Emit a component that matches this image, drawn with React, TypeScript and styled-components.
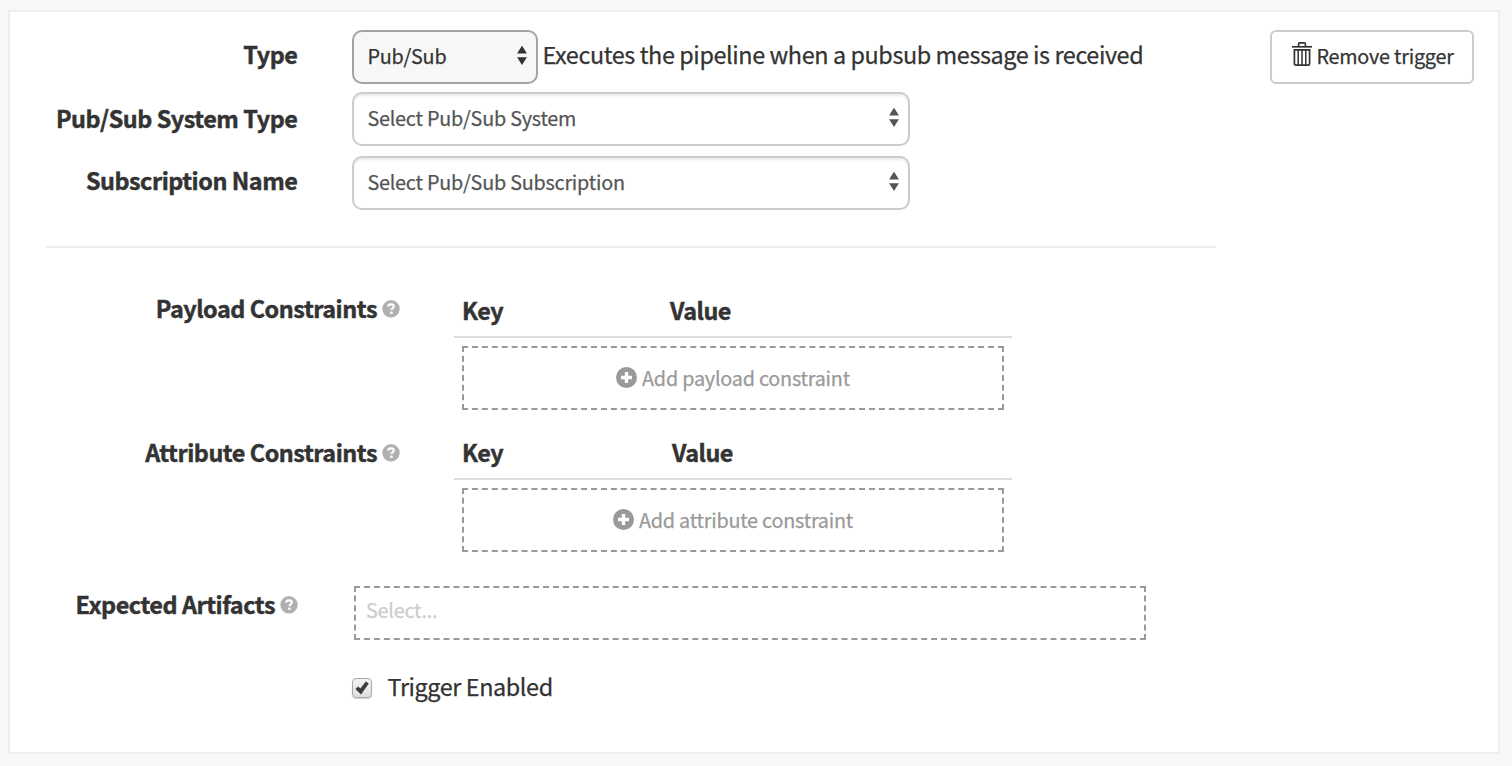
import React from "react";
import styled, { createGlobalStyle, css } from "styled-components";

const GlobalStyle = createGlobalStyle`
  *, *::before, *::after { box-sizing: border-box; }
  body {
    margin: 0;
    background: #f8f8f8;
    color: #333;
    font-family: "Noto Sans CJK SC", "Noto Sans", sans-serif;
    font-size: 23.4px;
    letter-spacing: -0.41px;
    line-height: 36px;
    white-space: nowrap;
    -webkit-text-stroke: 0.25px currentColor;
  }
`;

const boldText = css`
  font-weight: 700;
  letter-spacing: -0.47px;
  -webkit-text-stroke-width: 0.45px;
`;

const controlText = css`
  font-size: 19.8px;
  letter-spacing: -0.22px;
`;

const Page = styled.main`
  min-height: 766px;
  padding: 10px 12px 12px 8px;
`;

const Panel = styled.section`
  display: flex;
  justify-content: space-between;
  align-items: flex-start;
  height: 744px;
  padding: 18px 24px 0 36px;
  border: 2px solid #eee;
  background: #fff;
`;

const Form = styled.form`
  display: flex;
  flex-direction: column;
  width: 1170px;
`;

const Row = styled.div<{ $gap?: number; $label?: number }>`
  display: grid;
  grid-template-columns: ${(p) => p.$label ?? 252}px 1fr;
  column-gap: 54px;
  align-items: start;
  margin-top: ${(p) => p.$gap ?? 0}px;
`;

const Label = styled.label<{ $top?: number; $right?: number }>`
  display: flex;
  justify-content: flex-end;
  align-items: center;
  gap: 5px;
  margin-top: ${(p) => p.$top ?? 0}px;
  padding-right: ${(p) => p.$right ?? 0}px;
  ${boldText}
`;

const Inline = styled.div`
  display: flex;
  align-items: flex-start;
  gap: 4.5px;
`;

const SelectBox = styled.div<{ $width: number; $active?: boolean }>`
  display: flex;
  justify-content: space-between;
  align-items: center;
  width: ${(p) => p.$width}px;
  height: 54px;
  padding: 0 8px 3px 13.4px;
  border: 2px solid ${(p) => (p.$active ? "#a3a3a3" : "#ccc")};
  border-radius: 10px;
  background: ${(p) => (p.$active ? "#f7f7f7" : "#fff")};
  box-shadow: ${(p) => (p.$active ? "none" : "inset 0 2px 2px rgba(0, 0, 0, 0.075)")};
  color: ${(p) => (p.$active ? "#333" : "#555")};
  ${controlText}
`;

const Description = styled.span`
  margin-top: 6px;
`;

const Divider = styled.hr`
  width: 100%;
  height: 2px;
  margin: 36px 0 0;
  border: 0;
  background: #eee;
`;

const Table = styled.div`
  width: 558px;
`;

const TableHead = styled.div<{ $key: number }>`
  display: grid;
  grid-template-columns: ${(p) => p.$key}px 1fr;
  height: 46px;
  padding-left: 8px;
  border-bottom: 2px solid #ddd;
  ${boldText}
`;

const AddButton = styled.button`
  display: flex;
  justify-content: center;
  align-items: center;
  gap: 5px;
  width: 542px;
  height: 64px;
  margin: 8px 8px 0;
  padding: 0 0 1px;
  border: 2px dashed #999;
  background: transparent;
  color: #999;
  font: inherit;
  ${controlText}
`;

const ArtifactSelect = styled.div`
  display: flex;
  align-items: center;
  width: 792px;
  height: 54px;
  margin-left: 2px;
  padding: 0 10px 7px;
  border: 2px dashed #999;
  color: #ccc;
  ${controlText}
`;

const CheckLabel = styled.label`
  display: flex;
  align-items: center;
  gap: 15.5px;
`;

const CheckMark = styled.span`
  display: flex;
  align-items: center;
  justify-content: center;
  width: 20px;
  height: 20px;
  margin-top: 4px;
  border: 1.5px solid #aaa;
  border-radius: 4px;
  background: linear-gradient(#f4f4f4, #dedede);
  box-shadow: 0 1px 1px rgba(0, 0, 0, 0.18);
`;

const RemoveButton = styled.button`
  display: flex;
  align-items: center;
  gap: 4.4px;
  width: 204px;
  height: 54px;
  padding: 0 0 3px 20px;
  border: 2px solid #ccc;
  border-radius: 6px;
  background: #fff;
  color: #333;
  font: inherit;
  ${controlText}
`;

const TrashIcon = styled.svg`
  margin-bottom: 3px;
`;

const HelpIcon = styled.svg`
  margin-top: 2px;
`;

const Arrows = () => (
  <svg width="12" height="20" viewBox="0 0 12 20" fill="currentColor">
    <path d="M6 -0.4 10.9 7.5H1.1zM6 19.1 1.1 11.2h9.8z" />
  </svg>
);

const Help = () => (
  <HelpIcon width="18" height="18" viewBox="0 0 18 18">
    <circle cx="9" cy="8.8" r="8.7" fill="#b0b0b0" />
    <path d="M6.1 6.7C6.3 5.1 7.4 4.4 9 4.4s2.8.8 2.8 2.1c0 1.8-2.4 1.8-2.4 3.6" fill="none" stroke="#fff" strokeWidth="2.1" />
    <path d="M8.1 11.6h2.5v2.3H8.1z" fill="#fff" />
  </HelpIcon>
);

const Plus = () => (
  <svg width="21" height="21" viewBox="0 0 21 21">
    <circle cx="10.5" cy="10.5" r="10.5" fill="#999" />
    <path d="M8.8 5h3.4v3.8H16v3.4h-3.8V16H8.8v-3.8H5V8.8h3.8z" fill="#fff" />
  </svg>
);

const Trash = () => (
  <TrashIcon width="20" height="24" viewBox="0 0 20 24" fill="none" stroke="#333">
    <path d="M0 4.8h20" strokeWidth="1.7" />
    <path d="M6.6 4.2V1.9q0-1 1-1h4.8q1 0 1 1v2.3" strokeWidth="1.6" />
    <path d="M2.4 7.8h15.2v13.9q0 1.4-1.4 1.4H3.8q-1.4 0-1.4-1.4z" strokeWidth="1.7" />
    <path d="M6.2 8v15M10 8v15M13.8 8v15" strokeWidth="1.5" />
  </TrashIcon>
);

const Tick = () => (
  <svg width="14" height="14" viewBox="0 0 14 14" fill="#3b3b3b">
    <path d="M0.4 8 3.2 5.4 5.4 7.6 10.8 .4 13.8 2.6 6 13.4z" />
  </svg>
);

type ConstraintProps = {
  label: string;
  action: string;
  gap: number;
  labelTop: number;
  keyWidth: number;
};

const Constraints = ({ label, action, gap, labelTop, keyWidth }: ConstraintProps) => (
  <Row $gap={gap} $label={354}>
    <Label $top={labelTop}>
      {label}
      <Help />
    </Label>
    <Table>
      <TableHead $key={keyWidth}>
        <span>Key</span>
        <span>Value</span>
      </TableHead>
      <AddButton type="button">
        <Plus />
        {action}
      </AddButton>
    </Table>
  </Row>
);

export default function App() {
  return (
    <Page>
      <GlobalStyle />
      <Panel>
        <Form>
          <Row>
            <Label $top={6} $right={0.6}>Type</Label>
            <Inline>
              <SelectBox $width={186} $active>
                Pub/Sub
                <Arrows />
              </SelectBox>
              <Description>Executes the pipeline when a pubsub message is received</Description>
            </Inline>
          </Row>
          <Row $gap={8}>
            <Label $top={8} $right={0.6}>Pub/Sub System Type</Label>
            <SelectBox $width={558}>
              Select Pub/Sub System
              <Arrows />
            </SelectBox>
          </Row>
          <Row $gap={10}>
            <Label $top={6} $right={0.6}>Subscription Name</Label>
            <SelectBox $width={558}>
              Select Pub/Sub Subscription
              <Arrows />
            </SelectBox>
          </Row>
          <Divider />
          <Constraints label="Payload Constraints" action="Add payload constraint" gap={44} labelTop={-2} keyWidth={208} />
          <Constraints label="Attribute Constraints" action="Add attribute constraint" gap={24} labelTop={0} keyWidth={210} />
          <Row $gap={34}>
            <Label $top={0}>
              Expected Artifacts
              <Help />
            </Label>
            <ArtifactSelect>Select...</ArtifactSelect>
          </Row>
          <Row $gap={28}>
            <span />
            <CheckLabel>
              <CheckMark>
                <Tick />
              </CheckMark>
              Trigger Enabled
            </CheckLabel>
          </Row>
        </Form>
        <RemoveButton type="button">
          <Trash />
          Remove trigger
        </RemoveButton>
      </Panel>
    </Page>
  );
}
